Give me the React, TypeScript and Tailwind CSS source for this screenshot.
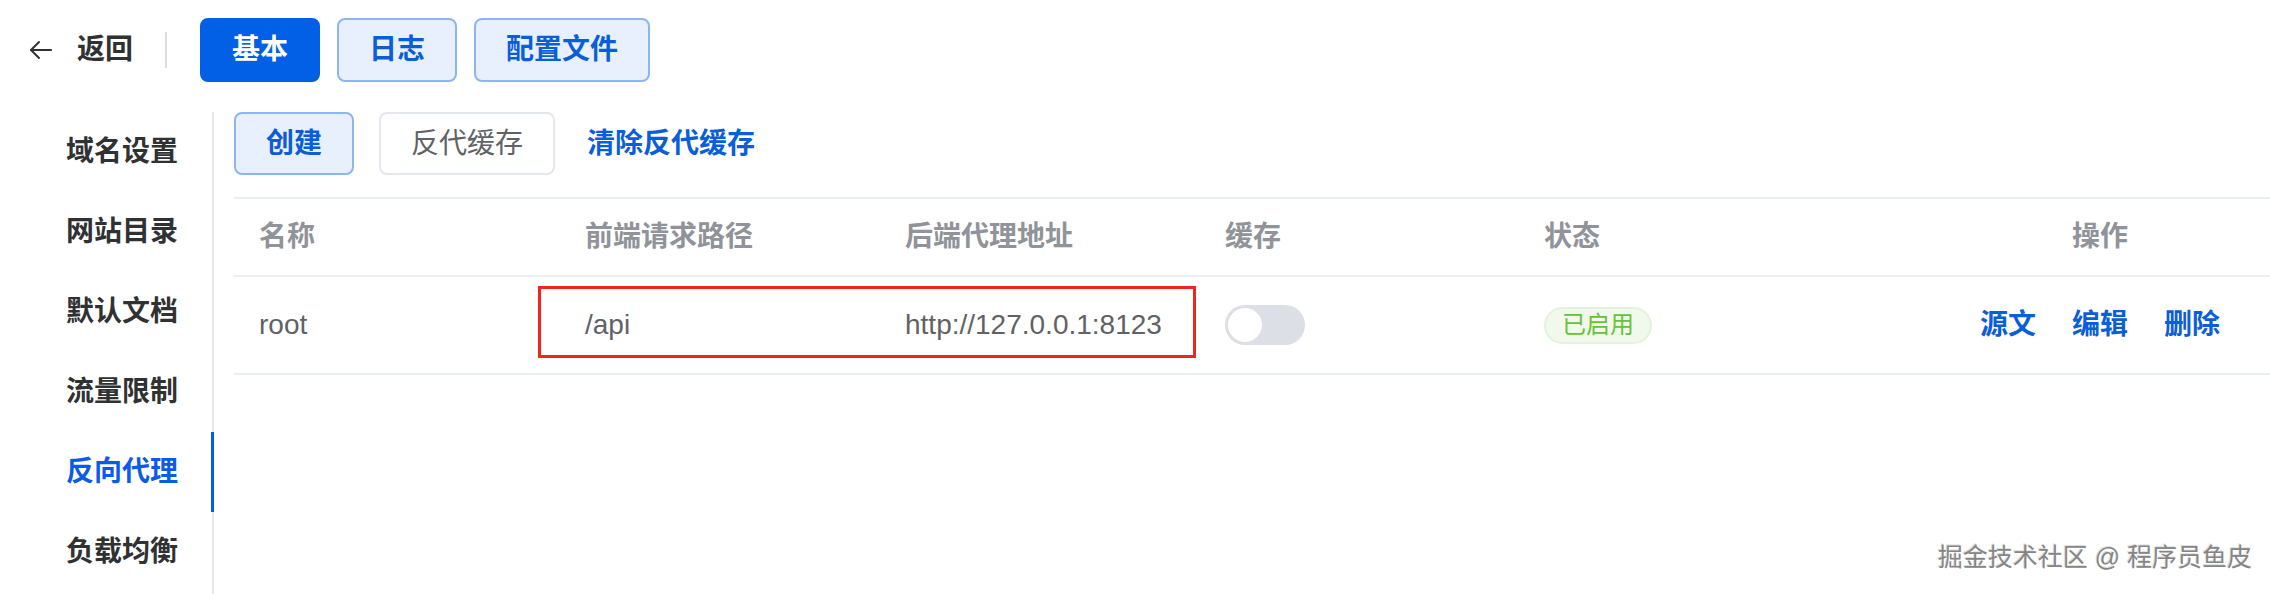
import React from "react";

const menu = ["域名设置", "网站目录", "默认文档", "流量限制", "反向代理", "负载均衡"];

function BackArrow() {
  return (
    <svg width="24" height="20" viewBox="0 0 24 20" fill="none" stroke="#303133" strokeWidth="2" strokeLinecap="round" strokeLinejoin="round">
      <path d="M22 10H2" />
      <path d="M10 2L2 10l8 8" />
    </svg>
  );
}

export default function App() {
  return (
    <div className="relative w-[2270px] h-[594px] overflow-hidden bg-white font-['Liberation_Sans','Noto_Sans_CJK_SC',sans-serif] leading-none">
      {/* top bar */}
      <div className="flex items-center h-[100px] pl-[29px]">
        <BackArrow />
        <span className="ml-[24px] text-[28px] font-semibold text-[#303133]">返回</span>
        <div className="ml-[32px] w-[2px] h-[36px] bg-[#dcdfe6]" />
        <div className="ml-[33px] flex items-center gap-[17px]">
          <button className="h-[64px] px-[30px] rounded-[8px] border-2 border-[#0160e6] bg-[#0160e6] text-white text-[28px] font-bold">基本</button>
          <button className="h-[64px] px-[30px] rounded-[8px] border-2 border-[#8db5ef] bg-[#e8f0fd] text-[#0a5ed8] text-[28px] font-bold">日志</button>
          <button className="h-[64px] px-[30px] rounded-[8px] border-2 border-[#8db5ef] bg-[#e8f0fd] text-[#0a5ed8] text-[28px] font-bold">配置文件</button>
        </div>
      </div>

      <div className="flex mt-[12px]">
        {/* sidebar */}
        <div className="w-[214px] border-r-2 border-[#e4e7ed] h-[482px]">
          {menu.map((m) => (
            <div
              key={m}
              className={`h-[80px] flex items-center pl-[66px] text-[28px] font-semibold ${
                m === "反向代理" ? "text-[#0a5ce6] border-r-[3px] border-[#0a5ce6] -mr-[2px]" : "text-[#303133]"
              }`}
            >
              {m}
            </div>
          ))}
        </div>

        {/* content */}
        <div className="flex-1 pl-[20px]">
          <div className="flex items-center h-[63px]">
            <button className="h-[63px] px-[30px] rounded-[8px] border-2 border-[#8db5ef] bg-[#e8f0fd] text-[#0a5ed8] text-[28px] font-bold">创建</button>
            <button className="ml-[25px] h-[63px] px-[30px] rounded-[8px] border-2 border-[#e4e7ed] bg-white text-[#606266] text-[28px]">反代缓存</button>
            <span className="ml-[32px] text-[28px] font-bold text-[#0a5ed8]">清除反代缓存</span>
          </div>

          <div className="mt-[22px]">
            <div className="grid grid-cols-[326px_320px_320px_319px_1fr_300px] pr-[20px] h-[80px] items-center border-y-2 border-[#ebeef5] text-[28px] font-semibold text-[#909399]">
              <div className="pl-[25px]">名称</div>
              <div className="pl-[25px]">前端请求路径</div>
              <div className="pl-[25px]">后端代理地址</div>
              <div className="pl-[25px]">缓存</div>
              <div className="pl-[25px]">状态</div>
              <div className="text-center">操作</div>
            </div>

            <div className="relative grid grid-cols-[326px_320px_320px_319px_1fr_300px] pr-[20px] h-[98px] items-center border-b-2 border-[#ebeef5] text-[28px] text-[#606266]">
              <div className="pl-[25px]">root</div>
              <div className="pl-[25px]">/api</div>
              <div className="pl-[25px]">http://127.0.0.1:8123</div>
              <div className="pl-[25px]">
                <div className="w-[80px] h-[40px] rounded-full bg-[#dcdfe6] flex items-center">
                  <div className="ml-[3px] w-[34px] h-[34px] rounded-full bg-white" />
                </div>
              </div>
              <div className="pl-[25px]">
                <span className="inline-flex items-center h-[37px] px-[16px] rounded-full border-2 border-[#e4f3dc] bg-[#f0f9eb] text-[24px] text-[#67c23a]">已启用</span>
              </div>
              <div className="flex justify-center gap-[36px] font-bold text-[#0a5ed8]">
                <span>源文</span>
                <span>编辑</span>
                <span>删除</span>
              </div>
              <div className="absolute left-[304px] top-[9px] w-[658px] h-[72px] border-[3px] border-[#f0261d]" />
            </div>
          </div>
        </div>
      </div>

      <div className="absolute right-[18px] bottom-[24px] text-[25px] text-[#858585] [text-shadow:1px_1px_0_#ffffff,-1px_-1px_0_#e0e0e0]">
        掘金技术社区 @ 程序员鱼皮
      </div>
    </div>
  );
}
